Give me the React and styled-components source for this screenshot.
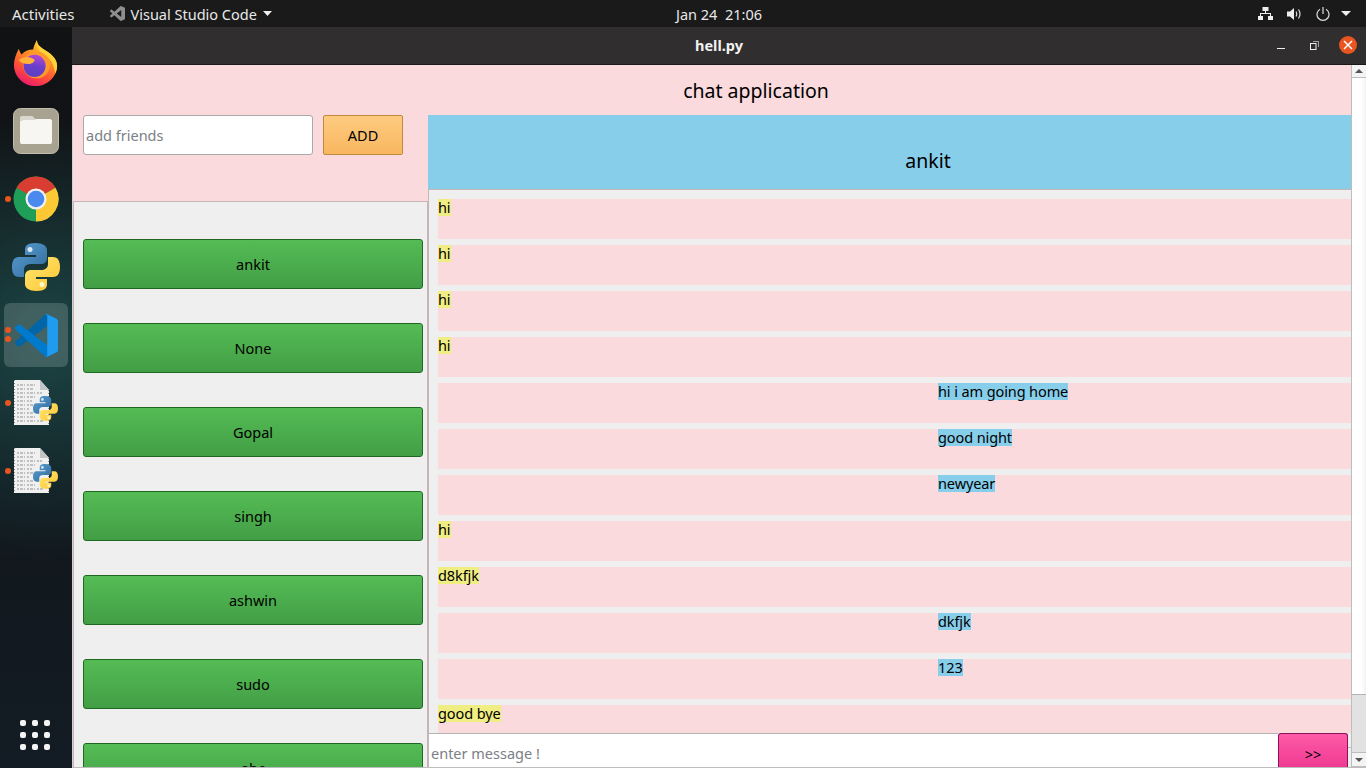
import React from 'react';
import styled, { createGlobalStyle } from 'styled-components';

const GlobalStyle = createGlobalStyle`
  html, body {
    margin: 0;
    height: 768px;
    overflow: hidden;
    background: #111;
  }
  * {
    box-sizing: border-box;
  }
`;

const Desktop = styled.div`
  width: 1366px;
  height: 768px;
  display: grid;
  grid-template-columns: 72px 1fr;
  grid-template-rows: 27px 1fr;
  font-family: "Noto Sans", "Open Sans", sans-serif;
  overflow: hidden;
`;

const TopBar = styled.div`
  grid-column: 1 / 3;
  background: #1a1a1a;
  color: #e8e8e8;
  font-size: 14.5px;
  display: grid;
  grid-template-columns: 1fr auto 1fr;
  align-items: center;
  padding: 0 12px;
`;

const TopLeft = styled.div`
  display: flex;
  align-items: center;
`;

const TopItem = styled.span`
  margin-right: 35px;
  font-size: 15px;
`;

const AppMenu = styled.div`
  display: flex;
  align-items: center;
  gap: 6px;
`;

const Clock = styled.div`
  margin-left: 72px;
`;

const TopRight = styled.div`
  display: flex;
  align-items: center;
  justify-content: flex-end;
  gap: 14px;
  padding-right: 3px;
`;

const MenuCaret = styled.svg`
  margin-left: -3px;
`;

const Dock = styled.div`
  background:
    radial-gradient(circle at 60% 42%, rgba(38, 112, 108, 0.55), rgba(16, 28, 36, 0) 52%),
    linear-gradient(180deg, #111214 0%, #101419 50%, #131c24 100%);
  position: relative;
  display: flex;
  flex-direction: column;
  align-items: center;
  padding-top: 4px;
`;

const DockSlot = styled.div`
  width: 64px;
  height: 64px;
  margin-bottom: 4px;
  display: flex;
  align-items: center;
  justify-content: center;
  position: relative;
  border-radius: 6px;
  background: ${(p) => (p.$active ? 'rgba(255,255,255,0.17)' : 'transparent')};
`;

const Pip = styled.span`
  position: absolute;
  left: 1px;
  top: ${(p) => p.$top}px;
  width: 6px;
  height: 6px;
  border-radius: 50%;
  background: #e9541f;
`;

const GridButton = styled.div`
  position: absolute;
  left: 20px;
  bottom: 18px;
  display: grid;
  grid-template-columns: repeat(3, 6px);
  gap: 6px;
`;

const GridDot = styled.span`
  width: 6px;
  height: 6px;
  border-radius: 2px;
  background: #f4f4f4;
`;

const Window = styled.div`
  display: flex;
  flex-direction: column;
  min-height: 0;
  background: #fadadd;
`;

const TitleBar = styled.div`
  height: 38px;
  flex: none;
  background: #302e2e;
  border-bottom: 1px solid #191919;
  color: #f2f2f2;
  font-weight: 700;
  font-size: 14.5px;
  display: flex;
  align-items: center;
  justify-content: center;
  position: relative;
  padding-bottom: 1px;
`;

const WinButtons = styled.div`
  position: absolute;
  right: 9px;
  top: 9px;
  display: flex;
  align-items: center;
`;

const WinGlyph = styled.svg`
  margin-right: ${(p) => p.$gap}px;
`;

const CloseBtn = styled.div`
  width: 18px;
  height: 18px;
  border-radius: 50%;
  background: #e95420;
  display: flex;
  align-items: center;
  justify-content: center;
`;

const WinBody = styled.div`
  flex: 1;
  min-height: 0;
  display: flex;
  border-left: 1px solid #d8cfd0;
  border-bottom: 1px solid #bdbdbd;
`;

const Main = styled.div`
  flex: 1;
  min-width: 0;
  display: flex;
  flex-direction: column;
`;

const AppTitle = styled.div`
  height: 50px;
  flex: none;
  display: flex;
  align-items: center;
  justify-content: center;
  font-size: 19.5px;
  color: #000;
  padding-left: 88px;
`;

const Columns = styled.div`
  flex: 1;
  min-height: 0;
  display: grid;
  grid-template-columns: 355px 1fr;
`;

const LeftCol = styled.div`
  display: flex;
  flex-direction: column;
  min-height: 0;
`;

const AddRow = styled.div`
  height: 86px;
  flex: none;
  display: flex;
  gap: 10px;
  padding-left: 10px;
`;

const FriendInput = styled.input`
  width: 230px;
  height: 40px;
  border: 1px solid #a9a9a9;
  border-radius: 3px;
  background: #fff;
  padding: 0 2px;
  font: 14.5px "Noto Sans", sans-serif;
  outline: none;
  &::placeholder {
    color: #7b8085;
    opacity: 1;
  }
`;

const AddButton = styled.button`
  width: 80px;
  height: 40px;
  border: 1px solid #c08a3c;
  border-radius: 2px;
  background: linear-gradient(180deg, #fdcb80 0%, #f9b65f 100%);
  font: 14.5px "Noto Sans", sans-serif;
  color: #000;
`;

const FriendList = styled.div`
  flex: 1;
  min-height: 0;
  overflow: hidden;
  background: #efefef;
  border: 1px solid #c5b5b7;
  border-bottom: 0;
  padding: 37px 0 0 9px;
  display: flex;
  flex-direction: column;
  gap: 34px;
`;

const FriendButton = styled.button`
  flex: none;
  width: 340px;
  height: 50px;
  border: 1px solid #1f6a1f;
  border-radius: 3px;
  background: linear-gradient(180deg, #55bc55 0%, #429e45 100%);
  font: 14.5px "Noto Sans", sans-serif;
  color: #000;
  padding: 0;
`;

const RightCol = styled.div`
  display: flex;
  flex-direction: column;
  min-height: 0;
  min-width: 0;
  background: #efefef;
`;

const ChatHead = styled.div`
  height: 74px;
  flex: none;
  background: #87ceeb;
  display: flex;
  align-items: center;
  justify-content: center;
  font-size: 19.5px;
  color: #000;
  padding: 17px 0 0 77px;
`;

const Messages = styled.div`
  flex: 1;
  min-height: 0;
  overflow: hidden;
  padding: 9px 0 0 9px;
  display: flex;
  flex-direction: column;
  gap: 6px;
  border-left: 1px solid #c5b5b7;
  border-top: 1px solid #c5b5b7;
`;

const MsgRow = styled.div`
  flex: none;
  height: 40px;
  background: #fadadd;
  padding-left: ${(p) => (p.$mine ? '500px' : '0')};
`;

const Bubble = styled.div`
  width: fit-content;
  height: 17px;
  line-height: 17px;
  font-size: 14.5px;
  letter-spacing: -0.1px;
  color: #000;
  background: ${(p) => (p.$mine ? '#87ceeb' : '#f0ee82')};
`;

const SendRow = styled.div`
  height: 34px;
  flex: none;
  display: flex;
  background: #efefef;
  position: relative;
  &::after {
    content: '';
    position: absolute;
    left: 920px;
    right: 0;
    top: 14px;
    height: 1px;
    background: #bdbdbd;
  }
`;

const MessageInput = styled.input`
  width: 850px;
  height: 34px;
  border: 0;
  border-top: 1px solid #b4b4b4;
  border-left: 1px solid #c5b5b7;
  background: #fff;
  padding: 4px 2px 0;
  font: 14.5px "Noto Sans", sans-serif;
  outline: none;
  &::placeholder {
    color: #7b8085;
    opacity: 1;
  }
`;

const SendButton = styled.button`
  width: 70px;
  height: 34px;
  border: 1px solid #8e1257;
  border-bottom: 0;
  border-radius: 3px 3px 0 0;
  background: linear-gradient(180deg, #ff5aa8 0%, #ee3b92 100%);
  font: 14.5px "Noto Sans", sans-serif;
  color: #000;
  padding: 6px 0 0;
`;

const ScrollBar = styled.div`
  width: 15px;
  flex: none;
  display: flex;
  flex-direction: column;
  background: #e2e2e2;
  border-left: 1px solid #bdbdbd;
`;

const ScrollBtn = styled.div`
  height: ${(p) => p.$h}px;
  flex: none;
  background: #f4f4f4;
  display: flex;
  align-items: center;
  justify-content: center;
  border-bottom: 1px solid #bdbdbd;
`;

const ScrollThumb = styled.div`
  height: 617px;
  flex: none;
  background: linear-gradient(90deg, #fff 0%, #fff 70%, #f1f1f1 100%);
  border-bottom: 1px solid #b4b4b4;
`;

const ScrollGap = styled.div`
  flex: 1;
  border-bottom: 1px solid #bdbdbd;
`;

const VsCodeMono = () => (
  <svg width="15" height="15" viewBox="0 0 100 100">
    <path fillRule="evenodd" fill="#8f8f8f" d="M70.9 99.3C72.5 99.9 74.3 99.9 75.9 99.1L96.5 89.2C98.6 88.2 100 86 100 83.6V16.4C100 14 98.6 11.8 96.5 10.8L75.9 0.9C73.8-0.1 71.3 0.1 69.5 1.4C69.3 1.6 69 1.8 68.8 2.1L29.4 38L12.2 25C10.6 23.8 8.4 23.9 6.9 25.2L1.4 30.3C-0.5 31.9-0.5 34.8 1.4 36.4L16.2 50L1.4 63.6C-0.5 65.2-0.5 68.1 1.4 69.7L6.9 74.8C8.4 76.1 10.6 76.2 12.2 75L29.4 62L68.8 97.9C69.4 98.5 70.1 99 70.9 99.3ZM75 27.3L45.1 50L75 72.7V27.3Z" />
  </svg>
);

const VsCode = () => (
  <svg width="43" height="43" viewBox="0 0 100 100">
    <path fill="#0065A9" d="M96.5 10.8L75.9 0.9C73.5-0.3 70.6 0.2 68.8 2.1L1.3 63.6C-0.5 65.2-0.5 68.1 1.3 69.7L6.8 74.8C8.3 76.1 10.5 76.2 12.1 75L93.4 13.4C96.1 11.3 100 13.2 100 16.7V16.4C100 14 98.6 11.8 96.5 10.8Z" />
    <path fill="#007ACC" d="M96.5 89.2L75.9 99.1C73.5 100.3 70.6 99.8 68.8 97.9L1.3 36.4C-0.5 34.8-0.5 31.9 1.3 30.3L6.8 25.2C8.3 23.9 10.5 23.8 12.1 25L93.4 86.6C96.1 88.7 100 86.8 100 83.3V83.6C100 86 98.6 88.2 96.5 89.2Z" />
    <path fill="#1F9CF0" d="M75.9 99.1C73.5 100.3 70.6 99.8 68.8 97.9C71.1 100.2 75 98.6 75 95.3V4.7C75 1.4 71.1-0.2 68.8 2.1C70.6 0.2 73.5-0.3 75.9 0.9L96.5 10.8C98.6 11.8 100 14 100 16.4V83.6C100 86 98.6 88.2 96.5 89.2L75.9 99.1Z" />
  </svg>
);

const Firefox = () => (
  <svg width="46" height="46" viewBox="0 0 46 48">
    <defs>
      <linearGradient id="ffa" x1="0.75" y1="0" x2="0.3" y2="1">
        <stop offset="0" stopColor="#ffe032" />
        <stop offset="0.4" stopColor="#ff8a24" />
        <stop offset="0.72" stopColor="#ff4a3c" />
        <stop offset="1" stopColor="#e8186f" />
      </linearGradient>
      <linearGradient id="ffb" x1="0.6" y1="0" x2="0.4" y2="1">
        <stop offset="0" stopColor="#b845d6" />
        <stop offset="0.5" stopColor="#6a3fcc" />
        <stop offset="1" stopColor="#5b3fc0" />
      </linearGradient>
    </defs>
    <path d="M24 0 C24 5 27 7 33 11 C41 16 45 21 45 27 C45 38 35 48 22.500 48 C10 48 0 38 0 26 C0 20 2 15 5 9 C6 12 7 14 8 15 C11 12 15 10 20 10 C21 6 22 3 24 0 Z" fill="url(#ffa)" />
    <path d="M24 0 C24 5 27 7 33 11 C41 16 45 21 45 27 C45 30 44 33 43 35 C42 26 38 18 30 14 C25 11 23 6 24 0 Z" fill="#ffd23a" />
    <circle cx="23.500" cy="26" r="14" fill="#ff9a2a" />
    <circle cx="21.500" cy="27" r="11.500" fill="url(#ffb)" />
    <path d="M5 21 C9 17 16 17 21 20 C23 22 19 25 15 25 C10 25 7 23 5 21 Z" fill="#ffb23a" />
  </svg>
);

const Files = () => (
  <svg width="46" height="46" viewBox="0 0 46 46">
    <rect x="0.500" y="0.500" width="45" height="45" rx="7" fill="#a8a291" stroke="#c2bdac" />
    <path d="M7 11 C7 9 8 8 10 8 H19 L22 11 H37 C38 11 39 12 39 13 V34 C39 35.500 38 36 37 36 H9 C8 36 7 35.500 7 34 Z" fill="#f7f6f3" />
    <path d="M7 14 V11 C7 9 8 8 10 8 H19 L23 12 H12 C9 12 8 13 7 14 Z" fill="#d9d6cd" />
  </svg>
);

const Chrome = () => (
  <svg width="46" height="46" viewBox="0 0 46 46">
    <circle cx="23" cy="23" r="22.500" fill="#1e9e56" />
    <path d="M23 23 L3.500 11.700 A22.500 22.500 0 0 1 42.500 11.700 Z" fill="#d93c30" />
    <path d="M23 23 L42.500 11.700 A22.500 22.500 0 0 1 23 45.500 Z" fill="#fcc934" />
    <circle cx="23" cy="23" r="10.500" fill="#f1f1f1" />
    <circle cx="23" cy="23" r="8.300" fill="#4a89ee" />
  </svg>
);

const Python = ({ size = 48, idSuffix = 'a' }) => (
  <svg width={size} height={size} viewBox="0 0 48 48">
    <defs>
      <linearGradient id={`pyb${idSuffix}`} x1="0" y1="0" x2="1" y2="1">
        <stop offset="0" stopColor="#5a9fd4" />
        <stop offset="1" stopColor="#306998" />
      </linearGradient>
      <linearGradient id={`pyy${idSuffix}`} x1="0" y1="0" x2="1" y2="1">
        <stop offset="0" stopColor="#ffe873" />
        <stop offset="1" stopColor="#ffc331" />
      </linearGradient>
    </defs>
    <path d="M23.500 0 C15 0 13 3 13 7 V12 H24 V14 H7 C2 14 0 18 0 24 C0 30 2 34 7 34 H12 V27 C12 23 15 21 19 21 H29 C32 21 35 19 35 15 V7 C35 3 31 0 23.500 0 Z" fill={`url(#pyb${idSuffix})`} />
    <path d="M24.500 48 C33 48 35 45 35 41 V36 H24 V34 H41 C46 34 48 30 48 24 C48 18 46 14 41 14 H36 V21 C36 25 33 27 29 27 H19 C16 27 13 29 13 33 V41 C13 45 17 48 24.500 48 Z" fill={`url(#pyy${idSuffix})`} />
    <circle cx="18" cy="6.500" r="2.500" fill="#dbe9f5" />
    <circle cx="30" cy="41.500" r="2.500" fill="#fff6cf" />
  </svg>
);

const PyFile = ({ idSuffix }) => (
  <svg width="48" height="48" viewBox="0 0 48 48">
    <path d="M2 1 H28 L37 11 V46 H2 Z" fill="#f0f0f0" />
    <path d="M28 1 L37 11 H28 Z" fill="#c4c4c4" />
    <path d="M2 1 V46" stroke="#222" strokeWidth="1" strokeDasharray="1 2" />
    <path d="M37 11 V46" stroke="#333" strokeWidth="1" strokeDasharray="1 2" />
    <path d="M5 6 H24 M5 10 H21 M5 14 H30 M5 18 H24 M5 22 H20 M5 26 H22 M5 30 H18 M5 34 H21 M5 38 H24 M5 42 H31" stroke="#b0b0b0" strokeWidth="1.500" strokeDasharray="2 1 3 1 1 2" />
    <svg x="21" y="17" width="25" height="25" viewBox="0 0 48 48">
      <Python idSuffix={idSuffix} />
    </svg>
  </svg>
);

const friends = ['ankit', 'None', 'Gopal', 'singh', 'ashwin', 'sudo', 'abc'];

const messages = [
  { text: 'hi' },
  { text: 'hi' },
  { text: 'hi' },
  { text: 'hi' },
  { text: 'hi i am going home', mine: true },
  { text: 'good night', mine: true },
  { text: 'newyear', mine: true },
  { text: 'hi' },
  { text: 'd8kfjk' },
  { text: 'dkfjk', mine: true },
  { text: '123', mine: true },
  { text: 'good bye' },
];

export default function App() {
  return (
    <>
      <GlobalStyle />
      <Desktop>
        <TopBar>
          <TopLeft>
            <TopItem>Activities</TopItem>
            <AppMenu>
              <VsCodeMono />
              <span>Visual Studio Code</span>
              <svg width="9" height="5" viewBox="0 0 9 5"><path d="M0 0 H9 L4.500 5 Z" fill="#eee" /></svg>
            </AppMenu>
          </TopLeft>
          <Clock>Jan 24&nbsp;&nbsp;21:06</Clock>
          <TopRight>
            <svg width="15" height="13" viewBox="0 0 15 13" fill="#eee">
              <rect x="4.500" y="0" width="6" height="4" />
              <rect x="0" y="9" width="5" height="4" />
              <rect x="10" y="9" width="5" height="4" />
              <path d="M7 4 H8 V6 H13 V9 H12 V7 H3 V9 H2 V6 H7 Z" />
            </svg>
            <svg width="15" height="14" viewBox="0 0 15 14" fill="none">
              <path d="M0 4.500 H3 L7 1 V13 L3 9.500 H0 Z" fill="#eee" />
              <path d="M9 4.500 Q10.500 7 9 9.500 M11.500 2.500 Q14.500 7 11.500 11.500" stroke="#ddd" strokeWidth="1.200" />
            </svg>
            <svg width="14" height="14" viewBox="0 0 14 14" fill="none" stroke="#ddd" strokeWidth="1.200">
              <path d="M4 2.200 A6 6 0 1 0 10 2.200" />
              <path d="M7 0 V7" />
            </svg>
            <MenuCaret width="10" height="5" viewBox="0 0 10 5"><path d="M0 0 H10 L5 5 Z" fill="#eee" /></MenuCaret>
          </TopRight>
        </TopBar>

        <Dock>
          <DockSlot><Firefox /></DockSlot>
          <DockSlot><Files /></DockSlot>
          <DockSlot><Pip $top={29} /><Chrome /></DockSlot>
          <DockSlot><Python /></DockSlot>
          <DockSlot $active><Pip $top={24} /><Pip $top={33} /><VsCode /></DockSlot>
          <DockSlot><Pip $top={29} /><PyFile idSuffix="b" /></DockSlot>
          <DockSlot><Pip $top={29} /><PyFile idSuffix="c" /></DockSlot>
          <GridButton>
            {Array.from({ length: 9 }).map((_, i) => <GridDot key={i} />)}
          </GridButton>
        </Dock>

        <Window>
          <TitleBar>
            hell.py
            <WinButtons>
              <WinGlyph $gap={25} width="8" height="8" viewBox="0 0 8 8"><path d="M0 7.500 H8" stroke="#eee" /></WinGlyph>
              <WinGlyph $gap={20} width="9" height="9" viewBox="0 0 9 9" fill="none" stroke="#eee"><rect x="0.500" y="2.500" width="5.500" height="6" /><path d="M3 0.500 H8.500 V6" strokeOpacity="0.6" /></WinGlyph>
              <CloseBtn>
                <svg width="10" height="10" viewBox="0 0 10 10"><path d="M1 1 L9 9 M9 1 L1 9" stroke="#fff" strokeWidth="1.500" /></svg>
              </CloseBtn>
            </WinButtons>
          </TitleBar>
          <WinBody>
            <Main>
              <AppTitle>chat application</AppTitle>
              <Columns>
                <LeftCol>
                  <AddRow>
                    <FriendInput placeholder="add friends" />
                    <AddButton>ADD</AddButton>
                  </AddRow>
                  <FriendList>
                    {friends.map((f) => <FriendButton key={f}>{f}</FriendButton>)}
                  </FriendList>
                </LeftCol>
                <RightCol>
                  <ChatHead>ankit</ChatHead>
                  <Messages>
                    {messages.map((m, i) => (
                      <MsgRow key={i} $mine={m.mine}>
                        <Bubble $mine={m.mine}>{m.text}</Bubble>
                      </MsgRow>
                    ))}
                  </Messages>
                  <SendRow>
                    <MessageInput placeholder="enter message !" />
                    <SendButton>&gt;&gt;</SendButton>
                  </SendRow>
                </RightCol>
              </Columns>
            </Main>
            <ScrollBar>
              <ScrollBtn $h={13}>
                <svg width="8" height="4" viewBox="0 0 8 4"><path d="M4 0 L8 4 H0 Z" fill="#555" /></svg>
              </ScrollBtn>
              <ScrollThumb />
              <ScrollGap />
              <ScrollBtn $h={14}>
                <svg width="8" height="4" viewBox="0 0 8 4"><path d="M0 0 H8 L4 4 Z" fill="#555" /></svg>
              </ScrollBtn>
            </ScrollBar>
          </WinBody>
        </Window>
      </Desktop>
    </>
  );
}
